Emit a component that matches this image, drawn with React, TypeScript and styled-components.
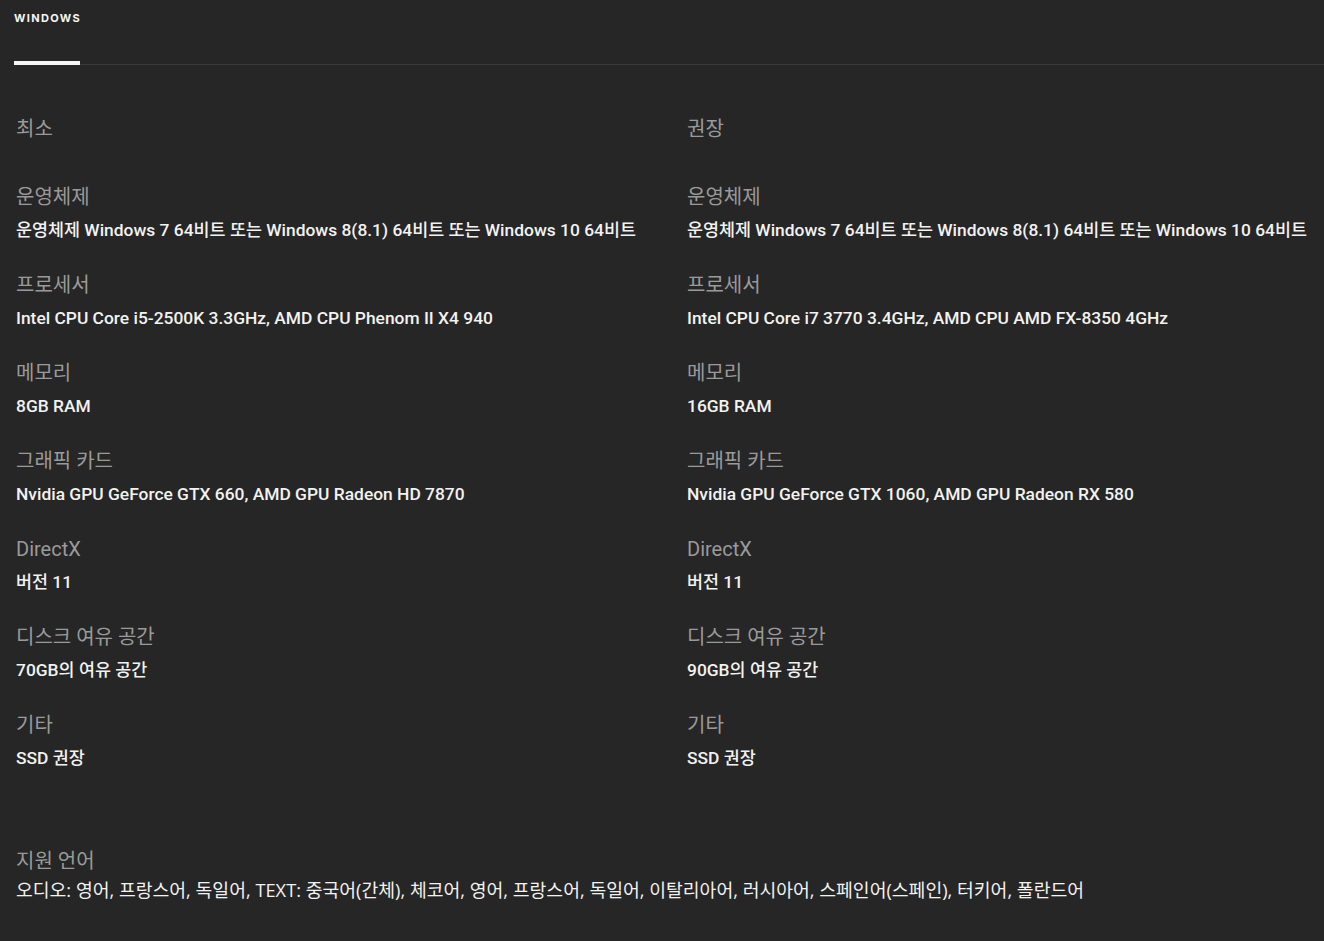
import React from "react";
import styled, { createGlobalStyle } from "styled-components";

const Global = createGlobalStyle`
  html, body { margin: 0; padding: 0; background: #262626; }
  body { font-family: Roboto, "Noto Sans CJK KR", sans-serif; color: #f2f2f2; }
  * { box-sizing: border-box; }
`;

const Page = styled.div`
  min-height: 941px;
  background: #262626;
  padding-left: 14px;
`;

const TabBar = styled.div`
  display: flex;
  height: 65px;
  border-bottom: 1px solid #3a3a3a;
`;

const Tab = styled.div<{ $active?: boolean }>`
  position: relative;
  padding-top: 11px;
  width: 66px;
  font-family: Inter, sans-serif;
  font-size: 11px;
  line-height: 14px;
  font-weight: 700;
  letter-spacing: 1.35px;
  color: #f5f5f5;
  &::after {
    content: "";
    display: ${(p) => (p.$active ? "block" : "none")};
    position: absolute;
    left: 0;
    right: 0;
    bottom: -1px;
    height: 4px;
    background: #f5f5f5;
  }
`;

const Columns = styled.div`
  display: grid;
  grid-template-columns: 671px 1fr;
  padding: 52px 0 0 2px;
`;

const Column = styled.div`
  display: flex;
  flex-direction: column;
`;

const Title = styled.div`
  font-family: Roboto, "Noto Sans CJK KR", sans-serif;
  font-size: 20px;
  line-height: 24px;
  color: #9a9a9a;
  margin-bottom: 44px;
`;

const Item = styled.div`
  display: flex;
  flex-direction: column;
  gap: 9px;
  margin-bottom: 31px;
  &:last-child { margin-bottom: 0; }
`;

const Label = styled.div`
  font-family: Roboto, "Noto Sans CJK KR", sans-serif;
  font-size: 20px;
  line-height: 24px;
  color: #9a9a9a;
`;

const Value = styled.div`
  font-family: Roboto, "Noto Sans CJK KR", sans-serif;
  font-size: 17.4px;
  line-height: 24px;
  font-weight: 500;
  color: #f2f2f2;
  white-space: nowrap;
`;

const Languages = styled.div`
  display: flex;
  flex-direction: column;
  gap: 5px;
  padding: 79px 0 0 2px;
`;

const LangLabel = styled.div`
  font-family: Roboto, "Noto Sans CJK KR", sans-serif;
  font-size: 20px;
  line-height: 24px;
  color: #9a9a9a;
`;

const LangValue = styled.div`
  font-family: "Open Sans", "Noto Sans CJK KR", sans-serif;
  font-size: 18.25px;
  line-height: 24px;
  color: #f2f2f2;
  white-space: nowrap;
`;

type Spec = [string, string];

const minimum: Spec[] = [
  ["운영체제", "운영체제 Windows 7 64비트 또는 Windows 8(8.1) 64비트 또는 Windows 10 64비트"],
  ["프로세서", "Intel CPU Core i5-2500K 3.3GHz, AMD CPU Phenom II X4 940"],
  ["메모리", "8GB RAM"],
  ["그래픽 카드", "Nvidia GPU GeForce GTX 660, AMD GPU Radeon HD 7870"],
  ["DirectX", "버전 11"],
  ["디스크 여유 공간", "70GB의 여유 공간"],
  ["기타", "SSD 권장"],
];

const recommended: Spec[] = [
  ["운영체제", "운영체제 Windows 7 64비트 또는 Windows 8(8.1) 64비트 또는 Windows 10 64비트"],
  ["프로세서", "Intel CPU Core i7 3770 3.4GHz, AMD CPU AMD FX-8350 4GHz"],
  ["메모리", "16GB RAM"],
  ["그래픽 카드", "Nvidia GPU GeForce GTX 1060, AMD GPU Radeon RX 580"],
  ["DirectX", "버전 11"],
  ["디스크 여유 공간", "90GB의 여유 공간"],
  ["기타", "SSD 권장"],
];

const SpecColumn = ({ title, specs }: { title: string; specs: Spec[] }) => (
  <Column>
    <Title>{title}</Title>
    {specs.map(([l, v]) => (
      <Item key={l}>
        <Label>{l}</Label>
        <Value>{v}</Value>
      </Item>
    ))}
  </Column>
);

export default function App() {
  return (
    <Page>
      <Global />
      <TabBar>
        <Tab $active>WINDOWS</Tab>
      </TabBar>
      <Columns>
        <SpecColumn title="최소" specs={minimum} />
        <SpecColumn title="권장" specs={recommended} />
      </Columns>
      <Languages>
        <LangLabel>지원 언어</LangLabel>
        <LangValue>
          오디오: 영어, 프랑스어, 독일어, TEXT: 중국어(간체), 체코어, 영어, 프랑스어, 독일어, 이탈리아어, 러시아어, 스페인어(스페인), 터키어, 폴란드어
        </LangValue>
      </Languages>
    </Page>
  );
}
